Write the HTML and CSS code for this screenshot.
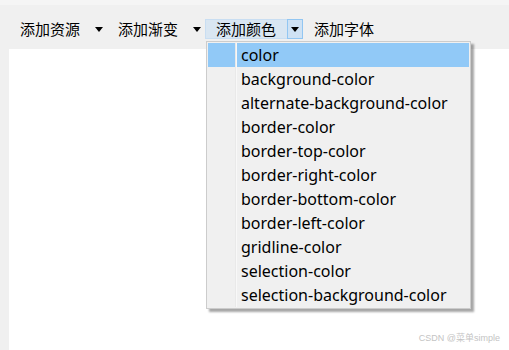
FILE: index.html
```html
<!DOCTYPE html>
<html lang="zh-CN">
<head>
    <meta charset="UTF-8">
    <meta name="viewport" content="width=device-width, initial-scale=1.0">
    <title>样式表编辑器</title>
    <link rel="stylesheet" href="styles.css">
</head>
<body>
    <div class="title-strip"></div>
    <div class="toolbar">
        <div class="tool-button">
            <span class="tool-label">添加资源</span>
            <span class="tool-arrow"><i class="caret"></i></span>
        </div>
        <div class="tool-button">
            <span class="tool-label">添加渐变</span>
            <span class="tool-arrow"><i class="caret"></i></span>
        </div>
        <div class="tool-button active">
            <span class="tool-label">添加颜色</span>
            <span class="tool-arrow"><i class="caret"></i></span>
        </div>
        <div class="tool-button plain">
            <span class="tool-label">添加字体</span>
        </div>
    </div>
    <div class="editor"></div>

    <!-- popup for 添加颜色 -->
    <ul class="menu">
        <li class="menu-item selected">color</li>
        <li class="menu-item">background-color</li>
        <li class="menu-item">alternate-background-color</li>
        <li class="menu-item">border-color</li>
        <li class="menu-item">border-top-color</li>
        <li class="menu-item">border-right-color</li>
        <li class="menu-item">border-bottom-color</li>
        <li class="menu-item">border-left-color</li>
        <li class="menu-item">gridline-color</li>
        <li class="menu-item">selection-color</li>
        <li class="menu-item">selection-background-color</li>
    </ul>

    <div class="watermark">CSDN @菜单simple</div>
</body>
</html>
```

FILE: styles.css
```css
html, body {
    height: 100%;
}

body {
    margin: 0;
    background-color: #f0f0f0;
    font-family: "Noto Sans", "Noto Sans CJK SC", sans-serif;
    font-size: 15px;
    color: #000;
    display: flex;
    flex-direction: column;
    overflow: hidden;
}

.title-strip {
    height: 5px;
    background-color: #f5f5f5;
}

.toolbar {
    display: flex;
    padding: 14px 0 10px 9px;
}

.tool-button {
    display: flex;
    align-items: center;
    width: 98px;
    height: 20px;
    box-sizing: border-box;
    border: 1px solid transparent;
}

.tool-label {
    padding-left: 10px;
    font-family: "Noto Sans CJK SC", sans-serif;
    line-height: 18px;
}

.tool-arrow {
    margin-left: auto;
    width: 16px;
    height: 20px;
    margin-right: -1px;
    box-sizing: border-box;
    border: 1px solid transparent;
    display: flex;
    align-items: center;
    justify-content: center;
}

.caret {
    width: 0;
    height: 0;
    border-top: 5px solid #000;
    border-left: 4.5px solid transparent;
    border-right: 4.5px solid transparent;
    margin-top: 1px;
}

.tool-button.active {
    background-color: #d9e6f2;
    border-color: #c9def2;
}

.tool-button.active .tool-arrow {
    background-color: #cfe2f4;
    border-color: #92c6f2;
}

.editor {
    flex: 1;
    margin-left: 9px;
    background-color: #fff;
}

.menu {
    position: absolute;
    left: 206px;
    top: 41px;
    width: 265px;
    box-sizing: border-box;
    margin: 0;
    padding: 1px;
    list-style: none;
    background-color: #f0f0f0;
    border: 1px solid #cccccc;
    box-shadow: 3px 3px 2px rgba(0, 0, 0, 0.35);
}

.menu::before {
    content: "";
    position: absolute;
    top: 1px;
    bottom: 1px;
    left: 28px;
    width: 1px;
    background-color: #e9e9e9;
    border-right: 1px solid #f8f8f8;
}

.menu-item {
    height: 24px;
    line-height: 24px;
    padding-left: 33px;
    font-size: 16px;
    white-space: nowrap;
}

.menu-item.selected {
    background-color: #91c9f7;
}

.watermark {
    position: absolute;
    right: 9px;
    bottom: 6px;
    font-family: "Liberation Sans", "Noto Sans CJK SC", sans-serif;
    font-size: 9px;
    color: #c4c4c4;
}
```
